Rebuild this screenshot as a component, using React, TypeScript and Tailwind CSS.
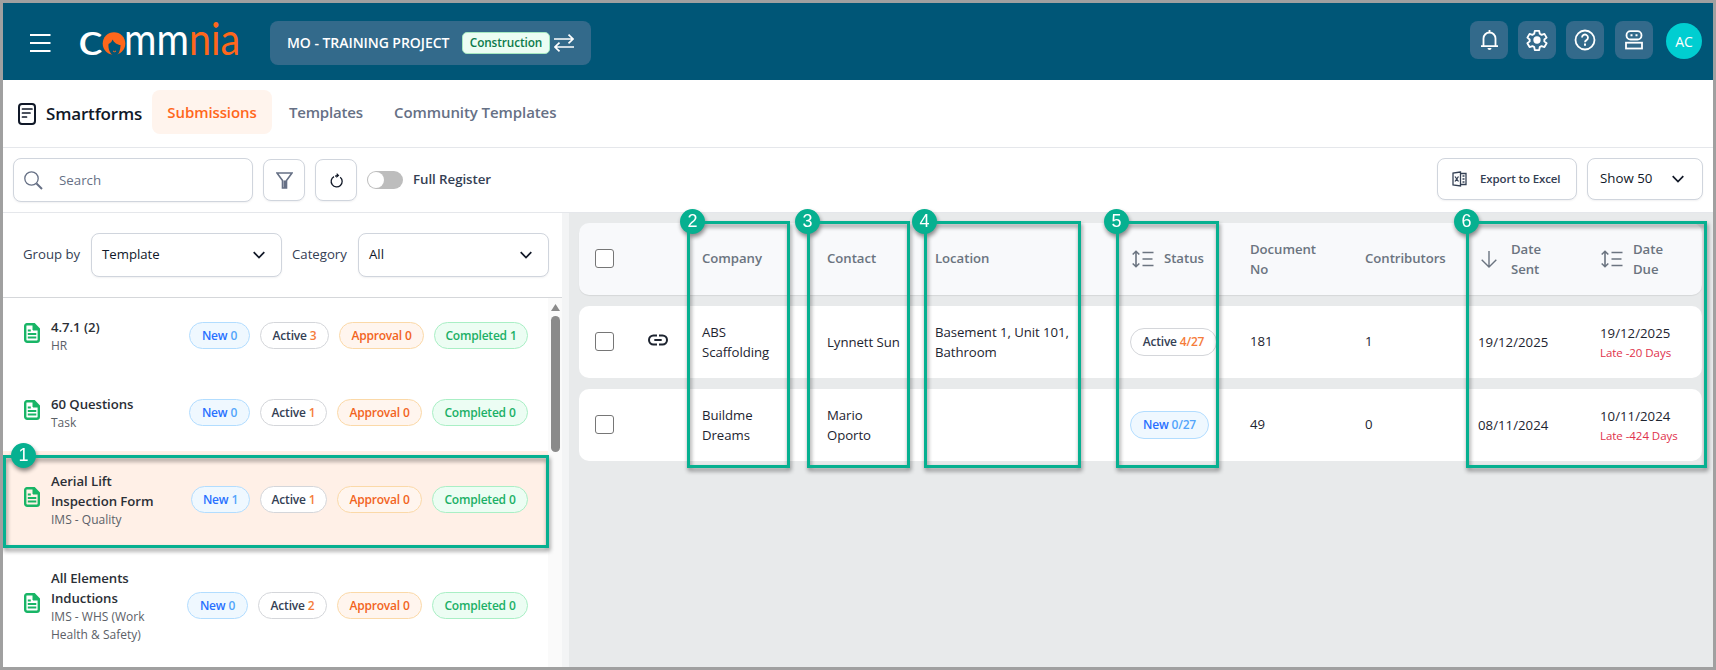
import React from "react";

const ICON = "shrink-0 fill-none stroke-current";

function Logo() {
  return (
    <svg className="h-[58px] w-[164px] shrink-0" viewBox="0 0 164 58" fontFamily="Lato, sans-serif">
      <text x="0" y="42" fontSize="44" fontWeight="400" fill="#fff" textLength="25" lengthAdjust="spacingAndGlyphs">c</text>
      <circle cx="36" cy="30.500" r="11.300" fill="#ff671b" />
      <path d="M30.500 31c2.500-1 3.500-3 4-4.500 1.500 3 5 5.500 8 5.500 0 5-2 10-4 10h-4c-2.500-2-4.500-6-4-11z" fill="#005677" />
      <path d="M35 38q1.500 1.500 3 0" stroke="#ff671b" strokeWidth="1" fill="none" />
      <text x="46" y="42" fontSize="44" fontWeight="400" fill="#fff" textLength="116" lengthAdjust="spacingAndGlyphs">
        mm<tspan fill="#ff671b">nia</tspan>
      </text>
    </svg>
  );
}

function Chevron() {
  return (
    <svg className={`${ICON} h-2 w-3 text-[#111827]`} viewBox="0 0 12 8" strokeWidth="1.7">
      <path d="M.7 1.200 6 6.500l5.300-5.300" />
    </svg>
  );
}

function SortIcon() {
  return (
    <svg className={`${ICON} h-[18px] w-[22px]`} viewBox="0 0 22 18" strokeWidth="1.6">
      <path d="M4 1.500v15M.7 4.500 4 1.300l3.300 3.200M.7 13.500 4 16.700l3.300-3.200M10.500 2.500h11M10.500 9h10M10.500 15.500h11" />
    </svg>
  );
}

function DocIcon() {
  return (
    <svg className="relative -top-[3px] h-5 w-4 shrink-0" viewBox="0 0 16 20" fill="none" stroke="#18b566">
      <path d="M3.500 1.200h6.700L14.800 6v10.800a2 2 0 0 1-2 2H3.200a2 2 0 0 1-2-2V3.200a2 2 0 0 1 2.300-2z" strokeWidth="2.400" />
      <path d="M9 1v6h6z" fill="#18b566" />
      <path d="M3.800 7.500h3M3.800 11h8.500M3.800 14.500h8.500" strokeWidth="2" />
    </svg>
  );
}

function TopButton({ children }: { children: React.ReactNode }) {
  return <button className="flex size-[38px] items-center justify-center rounded-lg bg-[#336a8b] text-white">{children}</button>;
}

function Header() {
  return (
    <header className="flex h-[77px] items-center bg-[#005677] pl-[26px] pr-[11px] text-white">
      <svg className={`${ICON} mt-[2px] h-5 w-[22px]`} viewBox="0 0 22 20" strokeWidth="1.800">
        <path d="M1 2h20.500M1 10h20.500M1 18h20.500" />
      </svg>
      <div className="ml-[27px]"><Logo /></div>
      <div className="ml-[28px] mt-[3px] flex h-11 w-[321px] items-center rounded-lg bg-[#336a8b] pl-[17px]">
        <span className="-mt-px w-[175px] whitespace-nowrap text-[14px] font-semibold tracking-[-0.050px]">MO - TRAINING PROJECT</span>
        <span className="flex h-[22px] w-[88px] items-center justify-center rounded-[5px] border border-[#a5e8c0] bg-[#ebfdf3] text-[11.800px] font-semibold tracking-[-0.100px] text-[#0b7a4b]">Construction</span>
        <svg className={`${ICON} ml-1 h-[18px] w-5`} viewBox="0 0 20 18" strokeWidth="1.700">
          <path d="M0 5h19M14.500.7 19 5l-4.500 4.300M20 13H1M5.500 8.700 1 13l4.500 4.300" />
        </svg>
      </div>
      <div className="ml-auto flex items-center gap-[10px] pb-[3px]">
        <TopButton>
          <svg className={`${ICON} h-5 w-[17px]`} viewBox="0 0 17 20" strokeWidth="1.800">
            <path d="M0 16.200h17M2.500 16V8.500a6 6 0 0 1 12 0V16M8.500 2.500V0" />
            <path d="M6.500 18h4a2 2 0 0 1-4 0z" fill="currentColor" stroke="none" />
          </svg>
        </TopButton>
        <TopButton>
          <svg className={`${ICON} size-[22px]`} viewBox="0 0 24 24" strokeWidth="2" strokeLinejoin="round">
            <path d="M9.600 2h4.800l.6 3.200 2 1.200 3.100-1.100 2.400 4.100-2.500 2.100v2l2.500 2.100-2.400 4.100-3.100-1.100-2 1.200-.6 3.200H9.600L9 19.800l-2-1.200-3.100 1.100-2.400-4.100L4 13.500v-2L1.500 9.400l2.400-4.100L7 6.400l2-1.200z" />
            <circle cx="12" cy="12" r="4" fill="currentColor" stroke="none" />
          </svg>
        </TopButton>
        <TopButton>
          <svg className={`${ICON} size-[22px]`} viewBox="0 0 22 22" strokeWidth="1.800">
            <circle cx="11" cy="11" r="9.500" />
            <path d="M8 8.500a3 3 0 1 1 4.500 2.600c-1 .6-1.500 1.100-1.500 2.200" />
            <path d="M11 14.600v2.200" strokeWidth="2" />
          </svg>
        </TopButton>
        <span className="ml-px">
          <TopButton>
            <svg className={`${ICON} h-[20px] w-[18px]`} viewBox="0 0 18 20" strokeWidth="1.800">
              <rect x="1.500" y="1.200" width="15" height="8.300" rx="4" />
              <path d="M5.500 5.300h2M10.500 5.300h2" strokeWidth="2" />
              <rect x="1" y="12.700" width="16" height="5.800" />
            </svg>
          </TopButton>
        </span>
        <span className="ml-[3px] mt-[2px] flex size-9 items-center justify-center rounded-full bg-[#00ced1] text-[14px]">AC</span>
      </div>
    </header>
  );
}

function Tabs() {
  return (
    <nav className="flex h-[68px] items-center border-b border-[#e5e7eb] pl-[15px] text-[15px] font-semibold text-[#667085]">
      <svg className={`${ICON} h-[22px] w-[18px] text-[#101828]`} viewBox="0 0 18 22" strokeWidth="2">
        <rect x="1" y="1" width="16" height="20" rx="3" />
        <path d="M4.500 6h9.500M4.500 10h7.500M4.500 14h4" strokeLinecap="round" strokeWidth="1.700" />
      </svg>
      <h1 className="ml-[10px] w-[106px] whitespace-nowrap text-[17px] font-semibold tracking-[-0.170px] text-[#101828]">Smartforms</h1>
      <a className="mb-[3px] flex h-11 w-[120px] items-center justify-center rounded-lg bg-[#fff4ed] tracking-[-0.100px] text-[#ff671b]">Submissions</a>
      <a className="mb-[3px] ml-[17px] w-[105px] tracking-[-0.200px]">Templates</a>
      <a className="mb-[3px] whitespace-nowrap tracking-[-0.080px]">Community Templates</a>
    </nav>
  );
}

const FIELD = "flex items-center rounded-lg border border-[#d0d5dd] bg-white shadow-[0_1px_2px_rgba(16,24,40,0.060)]";

function Toolbar() {
  return (
    <div className="flex h-[65px] items-center border-b border-[#e5e7eb] pl-[10px] pr-[10px] text-[13.300px]">
      <div className={`${FIELD} h-11 w-[240px] pl-[10px] text-[#667085]`}>
        <svg className={`${ICON} size-[19px]`} viewBox="0 0 19 19" strokeWidth="1.300">
          <circle cx="7.500" cy="7.500" r="6.700" />
          <path d="m12.500 12.500 5.500 5.500" strokeWidth="2" />
        </svg>
        <span className="ml-[16px] mt-[2px]">Search</span>
      </div>
      <button className={`${FIELD} ml-[10px] h-[42px] w-[42px] justify-center text-[#667085]`}>
        <svg className={`${ICON} h-[17px] w-[17px]`} viewBox="0 0 17 17" strokeWidth="1.600">
          <path d="M1 1h15l-5.500 7.500V16h-4V8.500z" />
          <path d="M7.500 8.500h3V16h-3z" fill="currentColor" stroke="none" />
        </svg>
      </button>
      <button className={`${FIELD} ml-[10px] h-[42px] w-[42px] justify-center text-[#111827]`}>
        <svg className={`${ICON} h-[15px] w-[13px]`} viewBox="0 0 13 15" strokeWidth="1.300">
          <path d="M10.200 4.200A5.500 5.500 0 1 1 4 3.600" />
          <path d="M6.800 0 9.300 2.500 6.300 5z" fill="currentColor" stroke="none" />
          <path d="M5 3.100 8 2.700" />
        </svg>
      </button>
      <span className="ml-[10px] flex h-[18px] w-9 items-center rounded-full bg-[#bdbdbd] p-px"><i className="size-4 rounded-full bg-white" /></span>
      <span className="ml-[10px] font-semibold tracking-[-0.060px] text-[#344054]">Full Register</span>
      <button className={`${FIELD} ml-auto mb-[2px] h-[42px] w-[140px] pl-[14px] text-[11.500px] font-semibold text-[#344054]`}>
        <svg className={`${ICON} h-4 w-[15px]`} viewBox="0 0 15 16" strokeWidth="1.300">
          <path d="M8.500 1 1 2v12l7.500 1zM8.500 2.500H14v11H8.500M3 5.500l3.500 5M6.500 5.500 3 10.500M10.500 5h2M10.500 8h2M10.500 11h2" />
        </svg>
        <span className="ml-[13px] whitespace-nowrap tracking-[-0.130px]">Export to Excel</span>
      </button>
      <button className={`${FIELD} ml-[10px] mb-[2px] h-[42px] w-[116px] pl-3 pr-[18px] text-[#101828]`}>
        <span className="flex-1 text-left">Show 50</span>
        <Chevron />
      </button>
    </div>
  );
}

type Tone = "new" | "active" | "approval" | "completed";
const TONES: Record<Tone, [string, string]> = {
  new: ["border-[#b2ddff] bg-[#eff8ff] text-[#2970ff]", "text-[#53a5fb]"],
  active: ["border-[#d4d6da] bg-white text-[#344054]", "text-[#f57c3a]"],
  approval: ["border-[#fbd9a8] bg-[#fff5ee] text-[#f2641d]", ""],
  completed: ["border-[#a9efc5] bg-[#ecfdf3] text-[#1bb066]", ""],
};

function Pill({ tone, label, value, size }: { tone: Tone; label: string; value: string; size: string }) {
  const [box, num] = TONES[tone];
  return (
    <span className={`flex items-center justify-center gap-[3px] whitespace-nowrap rounded-full border text-[12px] font-semibold tracking-[-0.200px] ${box} ${size}`}>
      {label}<span className={num}>{value}</span>
    </span>
  );
}

const TEMPLATES = [
  { title: ["4.7.1 (2)"], sub: ["HR"], n: [0, 3, 0, 1], h: "h-[77px]" },
  { title: ["60 Questions"], sub: ["Task"], n: [0, 1, 0, 0], h: "h-[77px]" },
  { title: ["Aerial Lift", "Inspection Form"], sub: ["IMS - Quality"], n: [1, 1, 0, 0], h: "h-[97px] bg-[#fff0e7]" },
  { title: ["All Elements", "Inductions"], sub: ["IMS - WHS (Work", "Health & Safety)"], n: [0, 2, 0, 0], h: "h-[115px]" },
];

function Select({ value }: { value: string }) {
  return (
    <div className={`${FIELD} h-11 w-[191px] justify-between pl-[10px] pr-4 text-[#101828]`}>
      {value}
      <Chevron />
    </div>
  );
}

function Sidebar() {
  return (
    <aside className="flex w-[559px] shrink-0 flex-col bg-white text-[13.200px] text-[#344054]">
      <div className="flex h-[85px] shrink-0 items-center border-b border-[#d5d7da] pl-5">
        <span className="w-[68px]">Group by</span>
        <Select value="Template" />
        <span className="ml-[10px] w-[66px]">Category</span>
        <Select value="All" />
      </div>
      <div className="flex min-h-0 flex-1">
        <div className="-mt-px w-[545px]">
          {TEMPLATES.map((t) => (
            <div key={t.title[0]} className={`flex items-center pl-[21px] pr-[20px] ${t.h}`}>
              <DocIcon />
              <div className="ml-[11px] whitespace-nowrap">
                {t.title.map((l) => <p key={l} className="h-5 font-semibold leading-5 tracking-[-0.050px] text-[#2b2f36]">{l}</p>)}
                {t.sub.map((l) => <p key={l} className="h-[18px] text-[12px] font-medium leading-[17px] text-[#5b6067]">{l}</p>)}
              </div>
              <div className="ml-auto flex gap-[10px]">
                <Pill tone="new" label="New" value={`${t.n[0]}`} size={t.n[0] ? "w-[59px] h-[27px]" : "w-[61px] h-[27px]"} />
                <Pill tone="active" label="Active" value={`${t.n[1]}`} size={t.n[1] > 1 ? "w-[69px] h-[27px]" : "w-[67px] h-[27px]"} />
                <Pill tone="approval" label="Approval" value={`${t.n[2]}`} size="w-[85px] h-[27px]" />
                <Pill tone="completed" label="Completed" value={`${t.n[3]}`} size={t.n[3] ? "w-[94px] h-[27px]" : "w-[96px] h-[27px]"} />
              </div>
            </div>
          ))}
        </div>
        <div className="flex w-[14px] flex-col items-center bg-[#fafafa] pt-[6px]">
          <svg className="h-[7px] w-[9px]" viewBox="0 0 9 7" fill="#8a8a8a"><path d="M4.500 0 9 7H0z" /></svg>
          <div className="mt-[5px] h-[136px] w-[9px] rounded-full bg-[#8a8a8a]" />
        </div>
      </div>
    </aside>
  );
}

const ROW = "grid h-[72px] items-center rounded-[10px] grid-cols-[69px_54px_125px_108px_195px_120px_115px_113px_122px_1fr]";

function Check() {
  return <span className="mb-px ml-4 size-[19px] rounded-[3px] border border-[#767676] bg-white" />;
}

function Lines({ text }: { text: string[] }) {
  return <div className="whitespace-nowrap leading-5">{text.map((l) => <p key={l}>{l}</p>)}</div>;
}

const SUBMISSIONS = [
  { link: true, company: ["ABS", "Scaffolding"], contact: ["Lynnett Sun"], location: ["Basement 1, Unit 101,", "Bathroom"], tone: "active" as Tone, label: "Active", value: "4/27", size: "w-[87px] h-7", doc: "181", people: "1", sent: "19/12/2025", due: "19/12/2025", late: "Late -20 Days" },
  { link: false, company: ["Buildme", "Dreams"], contact: ["Mario", "Oporto"], location: [], tone: "new" as Tone, label: "New", value: "0/27", size: "w-[79px] h-7", doc: "49", people: "0", sent: "08/11/2024", due: "10/11/2024", late: "Late -424 Days" },
];

function Register() {
  return (
    <section className="flex flex-1 flex-col gap-[11px] bg-[#e8eaeb] pl-[10px] pr-[11px] pt-[10px] text-[13.200px] tracking-[-0.050px] text-[#1d2430]">
      <div className={`${ROW} bg-[#f8f9fb] font-semibold text-[#6b7480] shadow-[0_1px_1px_rgba(0,0,0,0.080)]`}>
        <Check />
        <span />
        <span>Company</span>
        <span>Contact</span>
        <span>Location</span>
        <div className="flex items-center gap-[10px] pl-[2px]"><SortIcon /><span>Status</span></div>
        <Lines text={["Document", "No"]} />
        <span>Contributors</span>
        <div className="flex items-center gap-[14px] pl-[3px]">
          <svg className={`${ICON} h-[17px] w-4`} viewBox="0 0 16 17" strokeWidth="1.400"><path d="M8 0v16M.7 8.700 8 16l7.300-7.300" /></svg>
          <Lines text={["Date", "Sent"]} />
        </div>
        <div className="flex items-center gap-[10px] pl-[1px]"><SortIcon /><Lines text={["Date", "Due"]} /></div>
      </div>
      {SUBMISSIONS.map((s) => (
        <div key={s.doc} className={`${ROW} bg-white`}>
          <Check />
          {s.link ? (
            <svg className={`${ICON} mb-1 h-3 w-5`} viewBox="0 0 20 12" strokeWidth="2"><path d="M9 1.500H5.500a4.500 4.500 0 0 0 0 9H9M11 1.500h3.500a4.500 4.500 0 0 1 0 9H11M6.300 6h7.400" /></svg>
          ) : <span />}
          <Lines text={s.company} />
          <Lines text={s.contact} />
          <Lines text={s.location} />
          <Pill tone={s.tone} label={s.label} value={s.value} size={s.size} />
          <span>{s.doc}</span>
          <span>{s.people}</span>
          <span className="pt-[2px] tracking-[0.030px]">{s.sent}</span>
          <div className="pt-[2px] leading-5">
            <p className="tracking-[0.030px]">{s.due}</p>
            <p className="whitespace-nowrap text-[11.500px] text-[#e0314b]">{s.late}</p>
          </div>
        </div>
      ))}
    </section>
  );
}

const CALLOUTS = [
  { n: 1, box: "left-[3px] top-[455px] w-[546px] h-[93px]", dot: "left-[5px]" },
  { n: 2, box: "left-[687px] top-[221px] w-[103px] h-[247px]", dot: "-left-[10px]" },
  { n: 3, box: "left-[807px] top-[221px] w-[103px] h-[247px]", dot: "-left-[15px]" },
  { n: 4, box: "left-[924px] top-[221px] w-[157px] h-[247px]", dot: "-left-[15px]" },
  { n: 5, box: "left-[1116px] top-[221px] w-[103px] h-[247px]", dot: "-left-[15px]" },
  { n: 6, box: "left-[1466px] top-[221px] w-[241px] h-[247px]", dot: "-left-[15px]" },
];

export default function App() {
  return (
    <div className="relative flex h-[670px] w-[1716px] flex-col overflow-hidden border-[3px] border-[#a0a0a0] bg-white font-['Open_Sans',sans-serif]">
      <Header />
      <Tabs />
      <Toolbar />
      <main className="flex min-h-0 flex-1 overflow-hidden">
        <Sidebar />
        <div className="w-[7px] shrink-0 bg-[#f3f4f5]" />
        <Register />
      </main>
      <div className="pointer-events-none absolute -left-[3px] -top-[3px]">
        {CALLOUTS.map((c) => (
          <div key={c.n} className={`absolute border-[3px] border-[#06b090] drop-shadow-[1px_3px_2px_rgba(0,0,0,0.450)] ${c.box}`}>
            <span className={`absolute -top-[15px] flex size-[25px] items-center justify-center rounded-full bg-[#06b090] font-['Liberation_Sans',sans-serif] text-[18px] text-white ${c.dot}`}>{c.n}</span>
          </div>
        ))}
      </div>
    </div>
  );
}
